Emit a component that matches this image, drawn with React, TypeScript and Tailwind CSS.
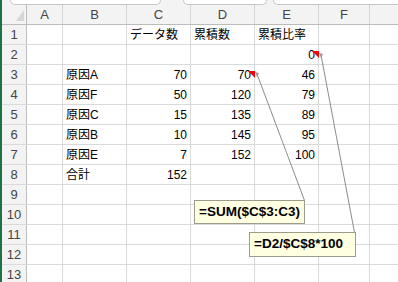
const cols = [
  { key: "A", w: "w-[36px]" },
  { key: "B", w: "w-[64px]" },
  { key: "C", w: "w-[64px]" },
  { key: "D", w: "w-[64px]" },
  { key: "E", w: "w-[64px]" },
  { key: "F", w: "w-[51px]" },
];

type Cell = { text: string; align?: "left" | "right" };

// row data, indexed by column letter
const rows: Record<string, Cell>[] = [
  { C: { text: "データ数" }, D: { text: "累積数" }, E: { text: "累積比率" } },
  { E: { text: "0", align: "right" } },
  { B: { text: "原因A" }, C: { text: "70", align: "right" }, D: { text: "70", align: "right" }, E: { text: "46", align: "right" } },
  { B: { text: "原因F" }, C: { text: "50", align: "right" }, D: { text: "120", align: "right" }, E: { text: "79", align: "right" } },
  { B: { text: "原因C" }, C: { text: "15", align: "right" }, D: { text: "135", align: "right" }, E: { text: "89", align: "right" } },
  { B: { text: "原因B" }, C: { text: "10", align: "right" }, D: { text: "145", align: "right" }, E: { text: "95", align: "right" } },
  { B: { text: "原因E" }, C: { text: "7", align: "right" }, D: { text: "152", align: "right" }, E: { text: "100", align: "right" } },
  { B: { text: "合計" }, C: { text: "152", align: "right" } },
  {},
  {},
  {},
  {},
  {},
];

function TopBar() {
  return (
    <div className="h-[12px] flex items-start bg-[#f3f3f3]">
      <div className="ml-[8px] w-[151px] h-[5px] bg-white border border-t-0 border-[#c6c6c6] rounded-b-[5px]" />
      <div className="ml-[22px] w-[84px] h-[5px] bg-white border border-t-0 border-[#c6c6c6] rounded-b-[5px]" />
      <div className="ml-[6px] flex-1 h-[5px] bg-white border border-t-0 border-r-0 border-[#c6c6c6] rounded-bl-[5px]" />
    </div>
  );
}

function HeaderRow() {
  return (
    <div className="h-[20px] flex bg-[#f3f3f3] border-b border-[#bcbcbc]">
      <div className="w-[25px] shrink-0 border-r border-[#bcbcbc] relative">
        <svg width="24" height="19" className="absolute left-0 top-0">
          <polygon points="14,16 22,5 22,16" fill="#d6d6d6" />
        </svg>
      </div>
      {cols.map((c) => (
        <div
          key={c.key}
          className={`${c.w} shrink-0 border-r border-[#d4d4d4] flex items-center justify-center text-[13px] text-[#444]`}
        >
          {c.key}
        </div>
      ))}
      <div className="flex-1" />
    </div>
  );
}

export default function App() {
  return (
    <div
      className="w-[398px] h-[282px] overflow-hidden relative bg-white border-l-2 border-[#1f7244] flex flex-col"
      style={{ fontFamily: "'Liberation Sans', 'Noto Sans CJK JP', sans-serif" }}
    >
      <TopBar />
      <HeaderRow />
      {rows.map((r, i) => (
        <div key={i} className="h-[20px] shrink-0 flex border-b border-[#dadada]">
          <div className="w-[25px] shrink-0 bg-[#f3f3f3] border-r border-[#bcbcbc] flex items-center justify-center text-[13px] text-[#444]">
            {i + 1}
          </div>
          {cols.map((c) => {
            const cell = r[c.key];
            return (
              <div
                key={c.key}
                className={`${c.w} shrink-0 border-r border-[#dadada] flex items-center px-[3px] text-[12px] text-black whitespace-nowrap ${
                  cell?.align === "right" ? "justify-end" : "justify-start"
                }`}
              >
                {cell?.text}
              </div>
            );
          })}
          <div className="flex-1" />
        </div>
      ))}

      {/* comment indicators and callout leaders */}
      <svg width="398" height="282" className="absolute left-[-2px] top-0 pointer-events-none">
        <polygon points="248,71 255,71 255,78" fill="#ff0000" />
        <polygon points="312,51 319,51 319,58" fill="#ff0000" />
        <line x1="257" y1="74" x2="304.5" y2="200.5" stroke="#8c8c8c" strokeWidth="1" />
        <line x1="321" y1="55" x2="354.5" y2="232.5" stroke="#8c8c8c" strokeWidth="1" />
        <polygon points="255,72 259,73 257,77" fill="#9a9a9a" />
        <polygon points="319,53 323,54 321,58" fill="#9a9a9a" />
      </svg>

      <div className="absolute left-[192px] top-[200px] w-[111px] h-[24px] bg-[#ffffe1] border border-[#9c9c8c] flex items-center pl-[4px] text-[13.5px] font-bold text-black">
        =SUM($C$3:C3)
      </div>
      <div className="absolute left-[247px] top-[232px] w-[107px] h-[25px] bg-[#ffffe1] border border-[#9c9c8c] flex items-center pl-[4px] text-[13.5px] font-bold text-black">
        =D2/$C$8*100
      </div>
    </div>
  );
}
